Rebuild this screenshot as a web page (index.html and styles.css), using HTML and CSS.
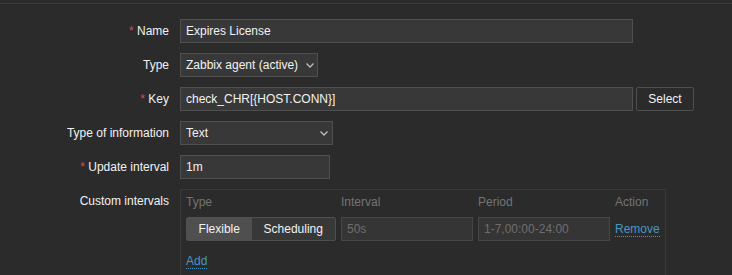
FILE: index.html
```html
<!DOCTYPE html>
<html lang="en">
  <head>
    <meta charset="UTF-8" />
    <meta name="viewport" content="width=device-width, initial-scale=1.0" />
    <title>Item</title>
    <link rel="stylesheet" href="styles.css">
  </head>

  <body>
    <div class="tabs__line"></div>

    <form class="item-form">
      <label class="label label--required">Name</label>
      <div class="field">
        <input class="input input--wide" type="text" value="Expires License" />
      </div>

      <label class="label">Type</label>
      <div class="field">
        <div class="select select--type">
          <span>Zabbix agent (active)</span>
          <svg width="8" height="5" viewBox="0 0 8 5"><path d="M0.5 0.5 L4 4 L7.5 0.5" fill="none" stroke="#bdbdbd" stroke-width="1.3" /></svg>
        </div>
      </div>

      <label class="label label--required">Key</label>
      <div class="field field--row">
        <input class="input input--wide" type="text" value="check_CHR[{HOST.CONN}]" />
        <button type="button" class="btn">Select</button>
      </div>

      <label class="label">Type of information</label>
      <div class="field">
        <div class="select select--info">
          <span>Text</span>
          <svg width="8" height="5" viewBox="0 0 8 5"><path d="M0.5 0.5 L4 4 L7.5 0.5" fill="none" stroke="#bdbdbd" stroke-width="1.3" /></svg>
        </div>
      </div>

      <label class="label label--required">Update interval</label>
      <div class="field">
        <input class="input input--short" type="text" value="1m" />
      </div>

      <label class="label">Custom intervals</label>
      <div class="field">
        <div class="intervals">
          <div class="intervals__head">Type</div>
          <div class="intervals__head">Interval</div>
          <div class="intervals__head">Period</div>
          <div class="intervals__head">Action</div>

          <ul class="radio-list">
            <li class="radio-list__item radio-list__item--active">Flexible</li>
            <li class="radio-list__item">Scheduling</li>
          </ul>
          <input class="input input--disabled input--cell" type="text" value="50s" disabled />
          <input class="input input--disabled input--cell" type="text" value="1-7,00:00-24:00" disabled />
          <div class="intervals__action"><a class="link" href="#">Remove</a></div>

          <div class="intervals__add"><a class="link" href="#">Add</a></div>
        </div>
      </div>
    </form>
  </body>
</html>
```

FILE: styles.css
```css
html {
  box-sizing: border-box;
  overflow: hidden;
}

*,
*:before,
*:after {
  box-sizing: inherit;
}

body {
  margin: 0;
  background: #2b2b2b;
  color: #f2f2f2;
  font-family: "Liberation Sans", Arial, sans-serif;
  font-size: 12px;
}

ul {
  list-style: none;
  margin: 0;
  padding: 0;
}

.tabs__line {
  height: 4px;
  border-bottom: 1px solid #3b3b3b;
}

.item-form {
  display: grid;
  grid-template-columns: 169px 1fr;
  column-gap: 11px;
  row-gap: 10px;
  padding-top: 15px;
}

.label {
  text-align: right;
  line-height: 24px;
  white-space: nowrap;
}

.label--required:before {
  content: "* ";
  color: #d64e4e;
}

.field {
  display: flex;
  align-items: flex-start;
}

.field--row {
  gap: 3px;
}

.input {
  height: 24px;
  padding: 0 5px;
  background: #383838;
  border: 1px solid #4f4f4f;
  color: #f2f2f2;
  font-family: inherit;
  font-size: 12px;
  outline: none;
}

.input--wide {
  width: 453px;
}

.input--short {
  width: 150px;
}

.input--cell {
  width: 132px;
}

.input--disabled {
  color: #6e6e6e;
  background: #353535;
  border-color: #474747;
}

.select {
  height: 24px;
  display: flex;
  align-items: center;
  justify-content: space-between;
  padding: 0 4px 0 5px;
  background: #383838;
  border: 1px solid #4f4f4f;
}

.select--type {
  width: 138px;
  padding-right: 3px;
}

.select--info {
  width: 153px;
}

.btn {
  width: 58px;
  height: 24px;
  background: #2b2b2b;
  border: 1px solid #4f4f4f;
  border-radius: 2px;
  color: #f2f2f2;
  font-family: inherit;
  font-size: 12px;
  padding: 0;
}

.intervals {
  display: grid;
  grid-template-columns: 150px 132px 132px auto;
  column-gap: 5px;
  padding: 5px 5px 12px 5px;
  border: 1px solid #3a3a3a;
}

.intervals__head {
  color: #737373;
  line-height: 14px;
  padding-bottom: 8px;
}

.radio-list {
  display: flex;
  height: 24px;
  border: 1px solid #4f4f4f;
  border-radius: 2px;
  overflow: hidden;
}

.radio-list__item {
  display: flex;
  align-items: center;
  justify-content: center;
  background: #383838;
  width: 84px;
}

.radio-list__item--active {
  background: #4f4f4f;
  width: 65px;
}

.intervals__action {
  display: flex;
  align-items: center;
}

.intervals__add {
  grid-column: 1 / -1;
  padding-top: 13px;
}

.link {
  color: #4796c4;
  text-decoration: none;
  line-height: 14px;
  display: inline-block;
  border-bottom: 1px dotted #4796c4;
}
```
